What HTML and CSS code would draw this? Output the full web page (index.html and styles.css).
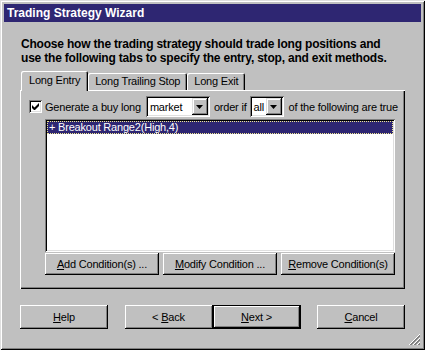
FILE: index.html
```html
<!DOCTYPE html>
<html lang="en">
<head>
    <meta charset="UTF-8">
    <title>Trading Strategy Wizard</title>
    <link rel="stylesheet" href="styles.css">
</head>
<body>
    <div class="window">
        <div class="titlebar">Trading Strategy Wizard</div>

        <div class="content">
            <p class="intro">Choose how the trading strategy should trade long positions and<br>use the following tabs to specify the entry, stop, and exit methods.</p>

            <!-- Tab strip -->
            <div class="tabs">
                <div class="tab active">Long Entry</div>
                <div class="tab">Long Trailing Stop</div>
                <div class="tab">Long Exit</div>
            </div>

            <div class="panel">
                <div class="rule-row">
                    <span class="checkbox">
                        <svg width="7" height="7" viewBox="0 0 7 7"><path d="M0 2v3l2 2h1l4-4V0L2.5 4.5z" fill="#000"/></svg>
                    </span>
                    <span class="label">Generate a buy long</span>
                    <span class="combo combo-market">
                        <span class="combo-value">market</span>
                        <span class="combo-btn"><svg width="7" height="4" viewBox="0 0 7 4"><path d="M0 0h7L3.5 4z" fill="#000"/></svg></span>
                    </span>
                    <span class="label short">order if</span>
                    <span class="combo combo-all">
                        <span class="combo-value">all</span>
                        <span class="combo-btn"><svg width="7" height="4" viewBox="0 0 7 4"><path d="M0 0h7L3.5 4z" fill="#000"/></svg></span>
                    </span>
                    <span class="label">of the following are true</span>
                </div>

                <div class="listbox">
                    <div class="list-item selected">+ Breakout Range2(High,4)</div>
                </div>

                <div class="condition-buttons">
                    <button type="button" class="btn"><u>A</u>dd Condition(s) ...</button>
                    <button type="button" class="btn"><u>M</u>odify Condition ...</button>
                    <button type="button" class="btn"><u>R</u>emove Condition(s)</button>
                </div>
            </div>

            <!-- Wizard navigation -->
            <div class="wizard-buttons">
                <button type="button" class="btn nav"><u>H</u>elp</button>
                <div class="back-next">
                    <button type="button" class="btn nav">&lt; <u>B</u>ack</button>
                    <button type="button" class="btn nav default"><u>N</u>ext &gt;</button>
                </div>
                <button type="button" class="btn nav"><u>C</u>ancel</button>
            </div>
        </div>

        <svg class="grip" width="13" height="13" viewBox="0 0 13 13">
            <path d="M12 1L1 12M12 5L5 12M12 9L9 12" stroke="#fff" stroke-width="1"/>
            <path d="M12 2L2 12M12 3L3 12M12 6L6 12M12 7L7 12M12 10L10 12M12 11L11 12" stroke="#808080" stroke-width="1"/>
        </svg>
    </div>
</body>
</html>
```

FILE: styles.css
```css
body {
    margin: 0;
    background-color: #c0c0c0;
    font-family: "Liberation Sans", Arial, sans-serif;
    font-size: 11px;
    letter-spacing: -0.2px;
    color: #000;
}

.window {
    position: relative;
    width: 425px;
    height: 350px;
    box-sizing: border-box;
    padding: 4px;
    background-color: #c0c0c0;
    box-shadow: inset 1px 1px #dfdfdf, inset -1px -1px #000,
                inset 2px 2px #fff, inset -2px -2px #808080;
}

.titlebar {
    height: 18px;
    line-height: 18px;
    padding-left: 3px;
    background-color: #2e2672;
    color: #fff;
    font-weight: bold;
    font-size: 12px;
    letter-spacing: 0;
}

.content {
    padding: 0 16px;
}

.intro {
    margin: 15px 0 0 1px;
    font-weight: bold;
    font-size: 12px;
    line-height: 14px;
    letter-spacing: -0.2px;
}

/* tabs */
.tabs {
    display: flex;
    align-items: flex-end;
    margin-top: 6px;
    padding-left: 1px;
    height: 19px;
    position: relative;
    z-index: 1;
    white-space: nowrap;
}

.tab {
    height: 17px;
    line-height: 16px;
    padding: 0 7px;
    box-sizing: border-box;
    border-top-left-radius: 2px;
    border-top-right-radius: 2px;
    box-shadow: inset 1px 1px #fff, inset -1px 0 #000, inset -2px 0 #808080;
}

.tab.active {
    height: 20px;
    line-height: 18px;
    padding: 0 8px;
    margin-bottom: -1px;
    background-color: #c0c0c0;
}

/* panel */
.panel {
    height: 199px;
    box-sizing: border-box;
    padding: 6px 10px 0 9px;
    box-shadow: inset 1px 1px #fff, inset -1px -1px #000, inset -2px -2px #808080;
}

.rule-row {
    display: flex;
    align-items: center;
    height: 21px;
    white-space: nowrap;
}

.checkbox {
    flex: none;
    width: 13px;
    height: 13px;
    box-sizing: border-box;
    background-color: #fff;
    display: flex;
    align-items: center;
    justify-content: center;
    margin-right: 3px;
    box-shadow: inset 1px 1px #808080, inset -1px -1px #fff,
                inset 2px 2px #000, inset -2px -2px #dfdfdf;
}

.label {
    flex: none;
    margin-right: 5px;
}

.label.short {
    margin-right: 3px;
}

.combo {
    flex: none;
    display: flex;
    align-items: center;
    height: 21px;
    box-sizing: border-box;
    padding: 2px;
    margin-right: 5px;
    background-color: #fff;
    box-shadow: inset 1px 1px #808080, inset -1px -1px #fff,
                inset 2px 2px #000, inset -2px -2px #dfdfdf;
}

.combo-market {
    width: 64px;
    margin-right: 4px;
}

.combo-all {
    width: 34px;
}

.combo-value {
    flex: 1;
    padding-left: 2px;
}

.combo-btn {
    width: 16px;
    height: 17px;
    box-sizing: border-box;
    display: flex;
    align-items: center;
    justify-content: center;
    background-color: #c0c0c0;
    box-shadow: inset -1px -1px #000, inset 1px 1px #dfdfdf,
                inset -2px -2px #808080, inset 2px 2px #fff;
}

.listbox {
    margin: 2px 0 0 16px;
    height: 133px;
    box-sizing: border-box;
    padding: 2px;
    background-color: #fff;
    box-shadow: inset 1px 1px #808080, inset -1px -1px #fff,
                inset 2px 2px #000, inset -2px -2px #dfdfdf;
}

.list-item {
    height: 13px;
    line-height: 11px;
    padding-left: 1px;
    box-sizing: border-box;
}

.list-item.selected {
    background-color: #2e2672;
    color: #fff;
    border: 1px dotted #f0e890;
}

.condition-buttons {
    display: flex;
    gap: 4px;
    margin: 1px 0 0 16px;
}

.btn {
    flex: 1;
    height: 22px;
    padding: 0;
    border: none;
    background-color: #c0c0c0;
    font-family: inherit;
    font-size: 11px;
    letter-spacing: -0.2px;
    color: #000;
    box-shadow: inset -1px -1px #000, inset 1px 1px #fff, inset -2px -2px #808080;
}

.wizard-buttons {
    display: flex;
    justify-content: space-between;
    margin-top: 16px;
}

.back-next {
    display: flex;
}

.btn.nav {
    flex: none;
    width: 88px;
    height: 24px;
}

.btn.default {
    box-shadow: inset 0 0 0 1px #000, inset -2px -2px #000,
                inset 2px 2px #fff, inset -3px -3px #808080;
}

.grip {
    position: absolute;
    right: 4px;
    bottom: 4px;
}
```
